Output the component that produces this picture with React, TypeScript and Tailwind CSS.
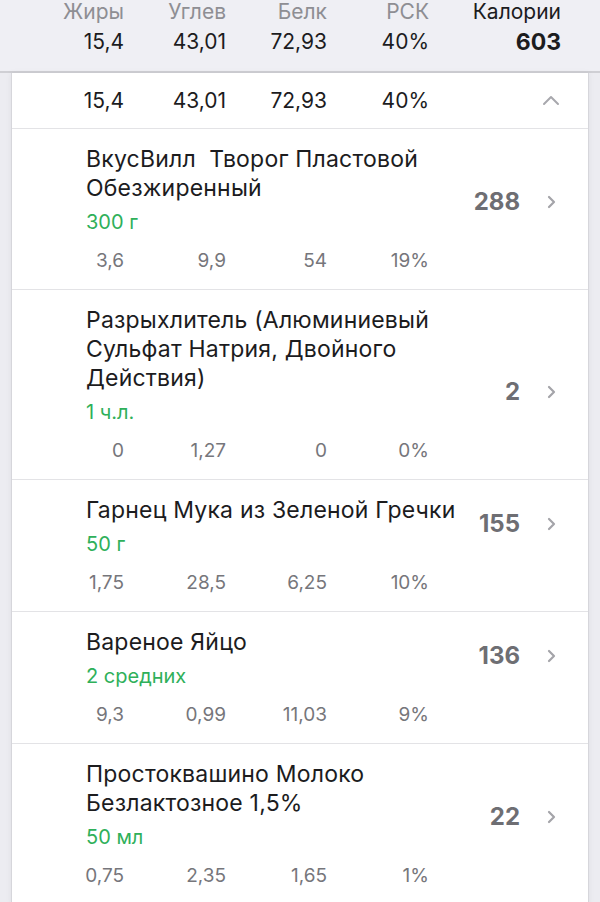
import React from 'react';

type Food = {
  name: string;
  amount: string;
  kcal: number;
  fat: string;
  carbs: string;
  protein: string;
  rsk: string;
};

const foods: Food[] = [
  { name: 'ВкусВилл  Творог Пластовой Обезжиренный', amount: '300 г', kcal: 288, fat: '3,6', carbs: '9,9', protein: '54', rsk: '19%' },
  { name: 'Разрыхлитель (Алюминиевый Сульфат Натрия, Двойного Действия)', amount: '1 ч.л.', kcal: 2, fat: '0', carbs: '1,27', protein: '0', rsk: '0%' },
  { name: 'Гарнец Мука из Зеленой Гречки', amount: '50 г', kcal: 155, fat: '1,75', carbs: '28,5', protein: '6,25', rsk: '10%' },
  { name: 'Вареное Яйцо', amount: '2 средних', kcal: 136, fat: '9,3', carbs: '0,99', protein: '11,03', rsk: '9%' },
  { name: 'Простоквашино Молоко Безлактозное 1,5%', amount: '50 мл', kcal: 22, fat: '0,75', carbs: '2,35', protein: '1,65', rsk: '1%' },
];

function ChevronRight() {
  return (
    <svg width="9" height="14" viewBox="0 0 9 14" fill="none">
      <path d="M2 2l5 5-5 5" stroke="#a4a4a9" strokeWidth="2.2" strokeLinecap="round" strokeLinejoin="round" />
    </svg>
  );
}

function ChevronUp() {
  return (
    <svg width="18" height="11" viewBox="0 0 18 11" fill="none">
      <path d="M2 9l7-7 7 7" stroke="#a8a8ad" strokeWidth="2" strokeLinecap="round" strokeLinejoin="round" />
    </svg>
  );
}

function MacroRow({ fat, carbs, protein, rsk, className }: { fat: string; carbs: string; protein: string; rsk: string; className: string }) {
  return (
    <div className={`flex ${className}`}>
      <div className="w-[112px] text-right">{fat}</div>
      <div className="w-[102px] text-right">{carbs}</div>
      <div className="w-[101px] text-right">{protein}</div>
      <div className="w-[102px] text-right">{rsk}</div>
    </div>
  );
}

export default function App() {
  return (
    <div
      className="w-[600px] h-[902px] overflow-hidden bg-[#ececf1] flex flex-col"
      style={{ fontFamily: 'Inter, "Noto Sans", sans-serif' }}
    >
      {/* totals header */}
      <div className="h-[73px] shrink-0 bg-[#efeff4] border-b-2 border-[#cfcfd4] flex flex-col">
        <div className="flex pt-[1px] text-[21px] leading-[22px] text-[#8e8e93]">
          <div className="w-[124px] text-right">Жиры</div>
          <div className="w-[102px] text-right">Углев</div>
          <div className="w-[101px] text-right">Белк</div>
          <div className="w-[102px] text-right">РСК</div>
          <div className="w-[132px] text-right text-[#1c1c1e]">Калории</div>
        </div>
        <div className="flex mt-[5px] text-[21px] leading-[28px] text-[#1c1c1e]">
          <div className="w-[124px] text-right">15,4</div>
          <div className="w-[102px] text-right">43,01</div>
          <div className="w-[101px] text-right">72,93</div>
          <div className="w-[102px] text-right">40%</div>
          <div className="w-[132px] text-right text-[23px] font-bold">603</div>
        </div>
      </div>

      <div className="flex-1 px-[11px] flex flex-col">
        <div className="flex-1 bg-white border-x border-[#d6d6db] shadow-[0_0_6px_rgba(0,0,0,0.06)]">
          <div className="h-[56px] flex items-center border-b border-[#e3e3e6]">
            <MacroRow fat="15,4" carbs="43,01" protein="72,93" rsk="40%" className="text-[21px] text-[#1c1c1e]" />
            <div className="ml-auto mr-[28px] flex items-center">
              <ChevronUp />
            </div>
          </div>

          {foods.map((f) => (
            <div key={f.name} className="flex border-b border-[#e3e3e6]">
              <div className="flex-1 pt-[16px] pb-[15px]">
                <div className="pl-[74px] pr-[2px] text-[23px] leading-[29px] tracking-[0.2px] whitespace-pre-wrap text-[#1c1c1e]">
                  {f.name}
                </div>
                <div className="pl-[74px] mt-[6px] text-[20px] leading-[26px] text-[#2fb05a]">{f.amount}</div>
                <MacroRow
                  fat={f.fat}
                  carbs={f.carbs}
                  protein={f.protein}
                  rsk={f.rsk}
                  className="mt-[13px] text-[19px] leading-[26px] text-[#76767b]"
                />
              </div>
              {/* kcal sits centred on the name/amount block, above the macro line */}
              <div className="w-[116px] shrink-0 flex items-end justify-end pr-[32px] pb-[72px]">
                <div className="h-[30px] flex items-center">
                  <span className="text-[24px] leading-[30px] font-bold text-[#6e6e73]">{f.kcal}</span>
                  <span className="ml-[27px] flex items-center">
                    <ChevronRight />
                  </span>
                </div>
              </div>
            </div>
          ))}
        </div>
      </div>
    </div>
  );
}
